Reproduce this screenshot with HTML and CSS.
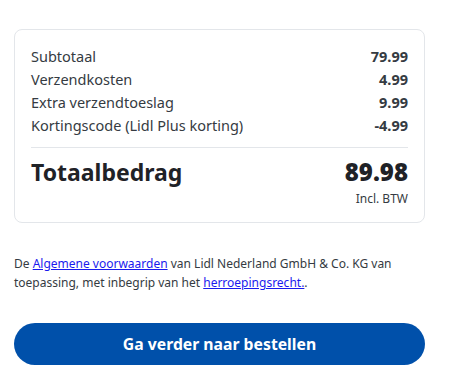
FILE: index.html
```html
<!DOCTYPE html>
<html lang="nl">
<head>
  <meta charset="UTF-8" />
  <title>Winkelwagen</title>
  <link rel="stylesheet" href="styles.css">
</head>
<body>
  <div class="checkout">
    <div class="summary">
      <div class="line"><span>Subtotaal</span><strong>79.99</strong></div>
      <div class="line"><span>Verzendkosten</span><strong>4.99</strong></div>
      <div class="line"><span>Extra verzendtoeslag</span><strong>9.99</strong></div>
      <div class="line"><span>Kortingscode (Lidl Plus korting)</span><strong>-4.99</strong></div>

      <div class="total">
        <span>Totaalbedrag</span>
        <strong>89.98</strong>
      </div>
      <div class="vat">Incl. BTW</div>
    </div>

    <p class="terms">
      De <a href="#">Algemene voorwaarden</a> van Lidl Nederland GmbH &amp; Co. KG van
      toepassing, met inbegrip van het <a href="#">herroepingsrecht.</a>.
    </p>

    <button class="order-btn">Ga verder naar bestellen</button>
  </div>
</body>
</html>
```

FILE: styles.css
```css
:root {
  --text: #353b42;
  --border: #e3e6ea;
  --blue: #0050aa;
}

body {
  margin: 0;
  font-family: "Noto Sans", "Open Sans", sans-serif;
  color: var(--text);
  background: #fff;
}

.checkout {
  width: 411px;
  padding: 29px 14px 0;
}

.summary {
  border: 1px solid var(--border);
  border-radius: 8px;
  padding: 15px 16px 15px;
}

.line {
  display: flex;
  justify-content: space-between;
  font-size: 14.5px;
  line-height: 23px;
}

.line strong {
  font-weight: 700;
}

.total {
  display: flex;
  justify-content: space-between;
  align-items: baseline;
  margin-top: 10px;
  padding-top: 8px;
  border-top: 1px solid var(--border);
  font-size: 24px;
  line-height: 32px;
  font-weight: 700;
  color: #1f2227;
}

.total span {
  font-size: 23px;
}

.vat {
  text-align: right;
  font-size: 12px;
  line-height: 17px;
  margin-top: 2px;
}

.terms {
  margin: 31px 0 0;
  font-size: 12px;
  line-height: 19px;
}

.terms a {
  color: #1a1aee;
}

.order-btn {
  display: block;
  width: 100%;
  height: 42px;
  margin-top: 31px;
  border: none;
  border-radius: 21px;
  background: var(--blue);
  color: #fff;
  font-family: inherit;
  font-size: 15.75px;
  font-weight: 700;
  cursor: pointer;
}
```
